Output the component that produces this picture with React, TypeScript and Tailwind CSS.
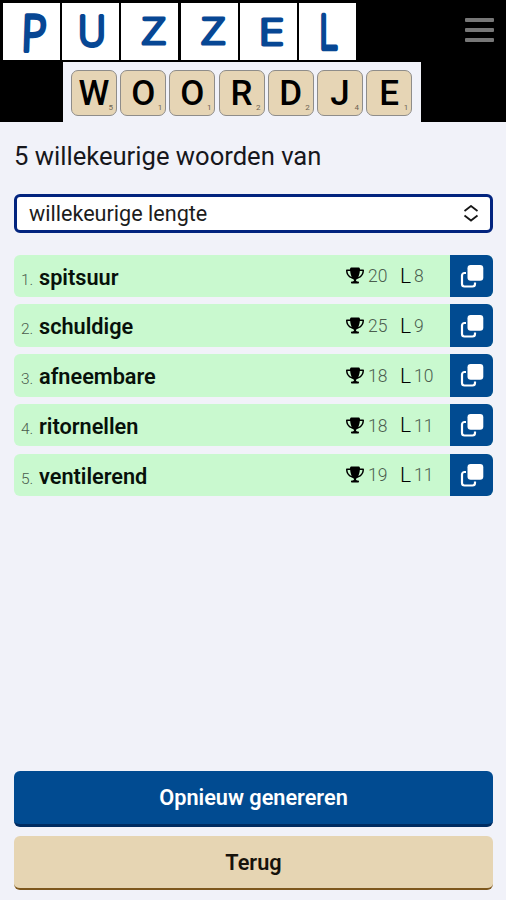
import { FaTrophy } from "react-icons/fa6";

const handwritten = [
  { letter: "P", size: 50, stroke: 4.2, transform: "translate(18 48) skewX(-2) scale(0.85 1)" },
  { letter: "U", size: 42, stroke: 3.8, transform: "translate(16 43) scale(0.92 1)" },
  { letter: "Z", size: 37, stroke: 3.2, transform: "translate(20.8 41) scale(1.13 1)" },
  { letter: "Z", size: 37, stroke: 3.2, transform: "translate(20.2 41) scale(1.13 1)" },
  { letter: "E", size: 37, stroke: 3, transform: "translate(18.5 42) scale(1.25 1)" },
  { letter: "L", size: 48, stroke: 4.4, transform: "translate(20.3 46) scale(0.72 1)" },
];

const tiles = [
  ["W", "5"],
  ["O", "1"],
  ["O", "1"],
  ["R", "2"],
  ["D", "2"],
  ["J", "4"],
  ["E", "1"],
];

const words = [
  { word: "spitsuur", score: 20, length: 8 },
  { word: "schuldige", score: 25, length: 9 },
  { word: "afneembare", score: 18, length: 10 },
  { word: "ritornellen", score: 18, length: 11 },
  { word: "ventilerend", score: 19, length: 11 },
];

function Header() {
  return (
    <header className="flex h-[122px] justify-between bg-black">
      <div className="flex w-[421px] flex-col pt-[3px]">
        <div className="flex gap-[2.2px] pl-[3px]">
          {handwritten.map((h, i) => (
            <svg key={i} width="57" height="57" viewBox="0 0 57 57" className="overflow-visible bg-white">
              <text
                className="font-['Open_Sans'] font-light"
                fontSize={h.size}
                transform={h.transform}
                fill="#074794"
                stroke="#074794"
                strokeWidth={h.stroke}
                strokeLinejoin="round"
              >
                {h.letter}
              </text>
            </svg>
          ))}
        </div>
        <div className="mt-[2px] ml-[62.500px] flex h-[60px] gap-[3.2px] bg-[#f1f2f9] pt-[7.5px] pl-[8.500px]">
          {tiles.map(([letter, points], i) => (
            <div
              key={i}
              className="relative h-[46px] w-[46px] rounded-[7px] border-[1.5px] border-[#8f8d8a] bg-[#e6d5b5] text-center"
            >
              <span className="text-[35px] leading-[45px] font-medium text-black">{letter}</span>
              <span className="absolute right-[3px] bottom-[3px] text-[8px] leading-[8px] text-[#6d6352]">
                {points}
              </span>
            </div>
          ))}
        </div>
      </div>
      <div className="mt-[18px] mr-[12px] flex flex-col gap-[6px]">
        <div className="h-[4px] w-[29px] rounded-[1px] bg-[#777]" />
        <div className="h-[4px] w-[29px] rounded-[1px] bg-[#777]" />
        <div className="h-[4px] w-[29px] rounded-[1px] bg-[#777]" />
      </div>
    </header>
  );
}

function CopyIcon() {
  return (
    <svg width="24" height="24" viewBox="0 0 24 24" fill="none">
      <path
        d="M6 9H4.500A2.500 2.500 0 0 0 2 11.500V20A2.500 2.500 0 0 0 4.500 22.500H12.500A2.500 2.500 0 0 0 15 20V18.500"
        stroke="white"
        strokeWidth="2.200"
      />
      <rect x="7.500" y="1" width="15.800" height="15.800" rx="3.200" fill="white" />
    </svg>
  );
}

export default function App() {
  return (
    <div className="flex h-[900px] w-[506px] flex-col overflow-hidden bg-[#f1f2f9] font-[Roboto,sans-serif] text-black">
      <Header />
      <main className="flex flex-1 flex-col pr-[13px] pl-[14px]">
        <h1 className="mt-[18px] text-[25.600px] leading-[32px] font-normal whitespace-nowrap text-[#17171c]">
          5 willekeurige woorden van
        </h1>
        <button className="mt-[22px] flex h-[39px] items-center justify-between rounded-[6px] border-[3px] border-[#02247f] bg-white pr-[11px] pl-[12px] text-[21.600px] text-[#1c1c1c]">
          <span className="pt-[1px]">willekeurige lengte</span>
          <svg width="16" height="18" viewBox="0 0 16 18" fill="none" stroke="#161616" strokeWidth="1.800">
            <path d="M1.500 6L8 1L14.500 6M1.500 10.500L8 15.500L14.500 10.500" />
          </svg>
        </button>
        <ul className="mt-[21.500px] flex flex-col gap-[7.200px]">
          {words.map((w) => (
            <li key={w.word} className="flex h-[42.600px] overflow-hidden rounded-[6px] bg-[#c9f9cf]">
              <div className="flex flex-1 items-baseline pl-[7px] leading-[45px]">
                <span className="w-[18px] text-[15.500px] font-light text-[#4b5d4e]">{words.indexOf(w) + 1}.</span>
                <span className="text-[21.700px] font-semibold text-[#07110a]">{w.word}</span>
              </div>
              <div className="flex w-[104px] items-center pt-[1px]">
                <FaTrophy className="mb-[1px] h-[19px] w-[18px] shrink-0" />
                <span className="ml-[4px] w-[32px] text-[17.500px] font-light text-[#4b5d4e]">{w.score}</span>
                <span className="w-[14px] pt-[1px] text-[21px] font-light">L</span>
                <span className="text-[17.500px] font-light text-[#4b5d4e]">{w.length}</span>
              </div>
              <button className="flex w-[43px] items-center justify-center bg-[#014b91]">
                <CopyIcon />
              </button>
            </li>
          ))}
        </ul>
        <div className="mt-auto flex flex-col gap-[9px] pb-[10px]">
          <button className="h-[56px] rounded-[6px] border-b-[3px] border-[#002c61] bg-[#014b91] pt-[2px] text-[21.700px] font-semibold text-white">
            Opnieuw genereren
          </button>
          <button className="h-[54px] rounded-[6px] border-b-[2.500px] border-[#7d571d] bg-[#e6d5b3] pt-[2px] text-[21.700px] font-semibold text-[#17130c]">
            Terug
          </button>
        </div>
      </main>
    </div>
  );
}
